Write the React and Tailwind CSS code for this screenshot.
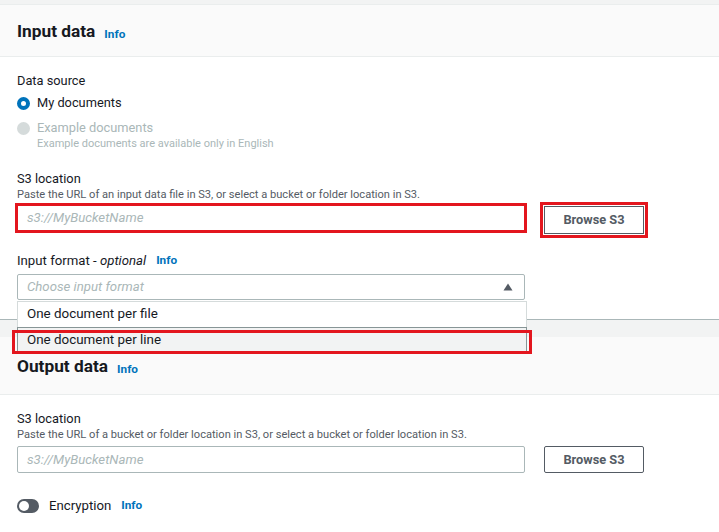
import React from "react";

const font = { fontFamily: "Roboto, 'Liberation Sans', Arial, sans-serif" };

function Info() {
  return <span className="text-[11.8px] font-bold text-[#0073bb]">Info</span>;
}

function Radio({ checked, disabled }) {
  if (checked) {
    return <span className="block w-[13px] h-[13px] rounded-full border-[4px] border-[#0073bb] bg-white" />;
  }
  return <span className={`block w-[13px] h-[13px] rounded-full ${disabled ? "bg-[#d5dbdb]" : "border border-[#879596] bg-white"}`} />;
}

function SectionHeader({ title, tall }) {
  return (
    <div className={`${tall ? "h-[58px]" : "h-[52px]"} bg-[#fafafa] border-b border-[#eaeded] px-[17px] flex items-center gap-[9px]`}>
      <h2 className="pt-[3px] text-[17.3px] font-bold text-[#16191f] leading-none">{title}</h2>
      <span className="pt-[4px]"><Info /></span>
    </div>
  );
}

export default function App() {
  return (
    <div style={font} className="min-h-screen flex flex-col bg-[#f2f3f3] pt-[4px] text-[#16191f]">
      {/* Input data container */}
      <section className="bg-white border-t border-[#eaeded] border-b border-b-[#aab7b8]">
        <SectionHeader title="Input data" />
        <div className="px-[17px] pt-[14px] pb-[19px]">
          <div className="h-[20px] flex items-center text-[12.8px]">Data source</div>
          <div className="mt-[2px] h-[20px] flex items-center gap-[7px] text-[12.8px]">
            <Radio checked />
            <span>My documents</span>
          </div>
          <div className="mt-[5px] h-[20px] flex items-center gap-[7px] text-[12.8px] text-[#aab7b8]">
            <Radio disabled />
            <span>Example documents</span>
          </div>
          <div className="pl-[20px] -mt-[1px] h-[14px] flex items-center text-[11px] text-[#aab7b8]">
            Example documents are available only in English
          </div>

          <div className="mt-[18px] h-[20px] flex items-center text-[12.8px]">S3 location</div>
          <div className="-mt-[1px] h-[14px] flex items-center text-[11.1px] text-[#545b64]">
            Paste the URL of an input data file in S3, or select a bucket or folder location in S3.
          </div>
          <div className="mt-[3px] flex items-start gap-[19px]">
            <div className="w-[508px] h-[26px] border border-[#aab7b8] px-[9px] flex items-center text-[13.2px] italic text-[#aab7b8] outline-[3px] outline-solid outline-[#e3161e] outline-offset-[-1px]">
              s3://MyBucketName
            </div>
            <button className="mt-[1px] w-[100px] h-[28px] border border-[#545b64] bg-white text-[12.8px] font-bold text-[#545b64] outline-[3px] outline-solid outline-[#e3161e] outline-offset-[1px]">
              Browse S3
            </button>
          </div>

          <div className="mt-[17px] h-[20px] flex items-center gap-[10px] text-[13.2px]">
            <span>
              Input format - <i>optional</i>
            </span>
            <Info />
          </div>
          <div className="relative mt-[3px] w-[508px]">
            <div className="h-[26px] border border-[#aab7b8] rounded-[2px] px-[9px] flex items-center justify-between text-[13.2px] italic text-[#aab7b8]">
              <span>Choose input format</span>
              <svg width="10" height="8" viewBox="0 0 10 8" className="mr-[2px]">
                <path d="M5 0.5 L9.5 7.5 L0.5 7.5 Z" fill="#545b64" />
              </svg>
            </div>
            {/* open dropdown menu */}
            <div className="absolute left-0 top-[27px] w-[510px] z-10 bg-white text-[13.4px] text-[#16191f]">
              <div className="h-[26px] border border-[#d5dbdb] border-b-0 px-[9px] flex items-center">
                One document per file
              </div>
              <div className="relative h-[27px] border border-[#879596] bg-[#f2f3f3] px-[9px] flex items-center">
                One document per line
                <div className="absolute left-[-6px] right-[-6px] top-[2px] bottom-[-1px] border-[3px] border-[#e3161e] pointer-events-none" />
              </div>
            </div>
          </div>
        </div>
      </section>

      <div className="h-[17px] shrink-0" />

      {/* Output data container */}
      <section className="flex-1 bg-white">
        <SectionHeader title="Output data" tall />
        <div className="px-[17px] pt-[14px] pb-[20px]">
          <div className="h-[20px] flex items-center text-[12.8px]">S3 location</div>
          <div className="-mt-[1px] h-[14px] flex items-center text-[11.1px] text-[#545b64]">
            Paste the URL of a bucket or folder location in S3, or select a bucket or folder location in S3.
          </div>
          <div className="mt-[4px] flex items-start gap-[19px]">
            <div className="w-[508px] h-[27px] border border-[#aab7b8] rounded-[2px] px-[9px] flex items-center text-[13.2px] italic text-[#aab7b8]">
              s3://MyBucketName
            </div>
            <button className="w-[100px] h-[27px] border border-[#545b64] rounded-[2px] bg-white text-[12.8px] font-bold text-[#545b64]">
              Browse S3
            </button>
          </div>
          <div className="mt-[23px] h-[20px] flex items-center gap-[10px] text-[13.2px]">
            <span className="relative block w-[22px] h-[14px] rounded-full bg-[#545b64]">
              <span className="absolute left-[2px] top-[2px] w-[10px] h-[10px] rounded-full bg-white" />
            </span>
            <span>Encryption</span>
            <Info />
          </div>
        </div>
      </section>
    </div>
  );
}
